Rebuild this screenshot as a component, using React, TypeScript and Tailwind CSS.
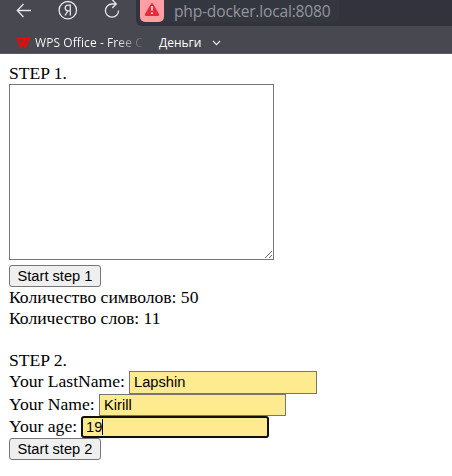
import React from "react";

function NavBar() {
  return (
    <div className="flex h-[26px] bg-[#484850]">
      <div className="flex w-[136px] shrink-0">
        <svg width="136" height="26" viewBox="0 0 136 26" fill="none" stroke="#e6e6e9" strokeWidth="1.3">
          <path d="M31 10.5H17.5M23.5 4L17.3 10.5L23.5 17" />
          <circle cx="67.8" cy="10.2" r="8.7" />
          <path d="M70.3 15.5V5.2H68.2C66.1 5.2 65.2 6.6 65.2 8.1C65.2 9.7 66.2 10.8 68 10.8H70.3M67.9 10.8L65 15.5" />
          <path d="M115.8 4H112A6.6 6.6 0 1 0 118.6 10.6M112.3 -0.2L116.3 4L112.3 8" />
        </svg>
      </div>
      <div className="flex flex-1 rounded-bl-[6px] bg-[#33333d]">
        <div className="ml-1 flex h-[22px] w-[199px] rounded-br-[6px] bg-[#343640]">
          <div className="h-[22px] w-6 shrink-0 rounded-b-[5px] bg-[#ff9ea5]">
            <svg width="24" height="22" viewBox="0 0 24 22">
              <path d="M12 4.7L17.8 14.7H6.2Z" fill="#e42d3b" stroke="#e42d3b" strokeWidth="2.8" strokeLinejoin="round" />
              <path d="M12 6V10.5M12 12.3V14" stroke="#ffe3e5" strokeWidth="1.6" />
            </svg>
          </div>
          <span className="ml-[10px] whitespace-nowrap font-['Open_Sans',sans-serif] text-[15.6px] leading-[22px] tracking-[-0.2px] text-[#94959d]">
            php-docker.local:8080
          </span>
        </div>
      </div>
    </div>
  );
}

function Bookmarks() {
  return (
    <div className="flex h-7 items-center border-b border-[#5b5b63] bg-[#484850] pl-4 pt-[6px] font-['Open_Sans',sans-serif] text-[12px] leading-4 text-white">
      <svg width="15" height="12" viewBox="0 0 15 12" fill="none" stroke="#ff0000" strokeWidth="1.7" className="shrink-0">
        <path d="M0.8 1.4H8.6L5 10L1.2 1.8M5.4 3.8L9.3 10L13.4 1.4H10L7.8 6.6" />
      </svg>
      <div className="ml-1 w-[109px] whitespace-nowrap bg-linear-to-r from-white from-[74%] to-[#484850] to-[101%] bg-clip-text tracking-[0.08px] text-transparent">
        WPS Office - Free C
      </div>
      <span className="ml-[15px] w-[43px] whitespace-nowrap">Деньги</span>
      <svg width="9" height="6" viewBox="0 0 9 6" fill="none" stroke="#e6e6e9" strokeWidth="1.2" className="ml-[10px]">
        <path d="M1 1L4.5 4.6L8 1" />
      </svg>
    </div>
  );
}

function StepButton({ label }: { label: string }) {
  return (
    <button
      type="button"
      className="block h-[22px] w-[92px] rounded-[3px] border border-[#767676] bg-[#efefef] font-['Liberation_Sans',Arial,sans-serif] text-[14.67px] leading-5 text-black"
    >
      {label}
    </button>
  );
}

function Field({ label, labelClass, value, rowClass, inputClass }: { label: string; labelClass: string; value: string; rowClass: string; inputClass: string }) {
  return (
    <div className={`flex ${rowClass}`}>
      <label className={`shrink-0 whitespace-nowrap leading-[20px] ${labelClass}`}>{label}</label>
      <input
        defaultValue={value}
        className={`border border-[#767676] bg-[#ffeb8f] px-1 font-['Liberation_Sans',Arial,sans-serif] text-[14.67px] leading-5 text-black outline-none ${inputClass}`}
      />
    </div>
  );
}

export default function App() {
  return (
    <div className="h-[476px] w-[452px] overflow-hidden bg-white">
      <NavBar />
      <Bookmarks />
      <main className="pl-[9px] pt-[9px] font-['Liberation_Serif','Times_New_Roman',serif] text-[17.6px] leading-[21px] text-black">
        <div>STEP 1.</div>
        <textarea className="block h-[176px] w-[265px] resize border border-[#767676] bg-white" />
        <div className="pt-[5px]">
          <StepButton label="Start step 1" />
        </div>
        <div>Количество символов: 50</div>
        <div>Количество слов: 11</div>
        <div className="pt-[21px]">STEP 2.</div>
        <Field label="Your LastName:" labelClass="w-[120px]" value="Lapshin" rowClass="h-[23px]" inputClass="w-[188px] pb-[2px]" />
        <Field label="Your Name:" labelClass="w-[90px]" value="Kirill" rowClass="h-[22px]" inputClass="w-[187px]" />
        <div className="flex h-[22px]">
          <label className="w-[72px] shrink-0 leading-[20px]">Your age:</label>
          <div className="flex w-[188px] items-center rounded-[3px] border-2 border-[#101010] bg-[#ffeb8f] pl-[3px] font-['Liberation_Sans',Arial,sans-serif] text-[14.67px] leading-[18px]">
            <span>19</span>
            <span className="h-4 w-px bg-black" />
          </div>
        </div>
        <StepButton label="Start step 2" />
      </main>
    </div>
  );
}
